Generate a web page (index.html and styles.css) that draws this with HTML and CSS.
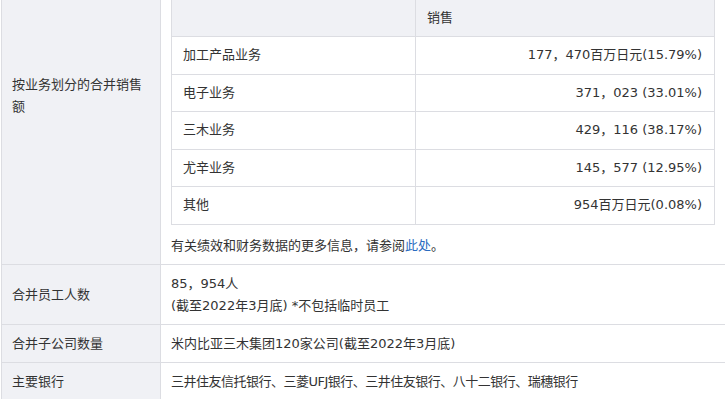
FILE: index.html
```html
<!DOCTYPE html>
<html lang="zh-CN">
<head>
<meta charset="utf-8">
<title>公司概况</title>
<link rel="stylesheet" href="styles.css">
</head>
<body>
<table class="spec">
  <tr>
    <td class="label label-top">按业务划分的合并销售额</td>
    <td class="value">
      <table class="sales">
        <tr class="head">
          <th class="seg"></th>
          <th class="amt-head">销售</th>
        </tr>
        <tr>
          <td class="seg">加工产品业务</td>
          <td class="amt">177，470百万日元(15.79%)</td>
        </tr>
        <tr>
          <td class="seg">电子业务</td>
          <td class="amt">371，023 (33.01%)</td>
        </tr>
        <tr>
          <td class="seg">三木业务</td>
          <td class="amt">429，116 (38.17%)</td>
        </tr>
        <tr>
          <td class="seg">尤辛业务</td>
          <td class="amt">145，577 (12.95%)</td>
        </tr>
        <tr>
          <td class="seg">其他</td>
          <td class="amt">954百万日元(0.08%)</td>
        </tr>
      </table>
      <p class="note">有关绩效和财务数据的更多信息，请参阅<a class="link" href="#">此处</a>。</p>
    </td>
  </tr>
  <tr>
    <td class="label">合并员工人数</td>
    <td class="value">85，954人<br>(截至2022年3月底) *不包括临时员工</td>
  </tr>
  <tr>
    <td class="label">合并子公司数量</td>
    <td class="value">米内比亚三木集团120家公司(截至2022年3月底)</td>
  </tr>
  <tr>
    <td class="label">主要银行</td>
    <td class="value banks">三井住友信托银行、三菱UFJ银行、三井住友银行、八十二银行、瑞穗银行</td>
  </tr>
</table>
</body>
</html>
```

FILE: styles.css
```css
html, body {
  margin: 0;
  padding: 0;
  background: #ffffff;
}

body {
  font-family: "DejaVu Sans", "Noto Sans CJK SC", sans-serif;
  font-size: 13px;
  color: #333333;
  overflow: hidden;
}

.spec {
  border-collapse: separate;
  border-spacing: 0;
  margin: -10px 0 0 1px;
  width: 724px;
  border-left: 1px solid #dcdde2;
  table-layout: fixed;
}

.spec td {
  box-sizing: border-box;
  border-top: 1px solid #dcdde2;
  line-height: 22px;
  vertical-align: middle;
}

.label {
  width: 159px;
  background: #f0f1f5;
  border-right: 1px solid #dcdde2;
  padding: 7.5px 10px;
}

.label-top {
  vertical-align: top !important;
  padding-top: 83px;
}

.value {
  padding: 7.5px 10px;
}

.banks {
  letter-spacing: -0.5px;
}

.sales {
  border-collapse: collapse;
  width: 544px;
  table-layout: fixed;
  border: 1px solid #dcdde2;
}

.sales th,
.sales td {
  border: 1px solid #dcdde2;
  line-height: 22px;
  padding: 7.25px 11px;
  font-weight: normal;
  text-align: left;
}

.sales .head th {
  background: #f0f1f5;
}

.sales .seg {
  width: 244px;
  box-sizing: border-box;
}

.sales .amt {
  text-align: right;
  padding-right: 12px;
}

.note {
  margin: 10px 0 0 0;
  line-height: 22px;
}

.link {
  color: #2a6cc0;
  text-decoration: none;
}
```
